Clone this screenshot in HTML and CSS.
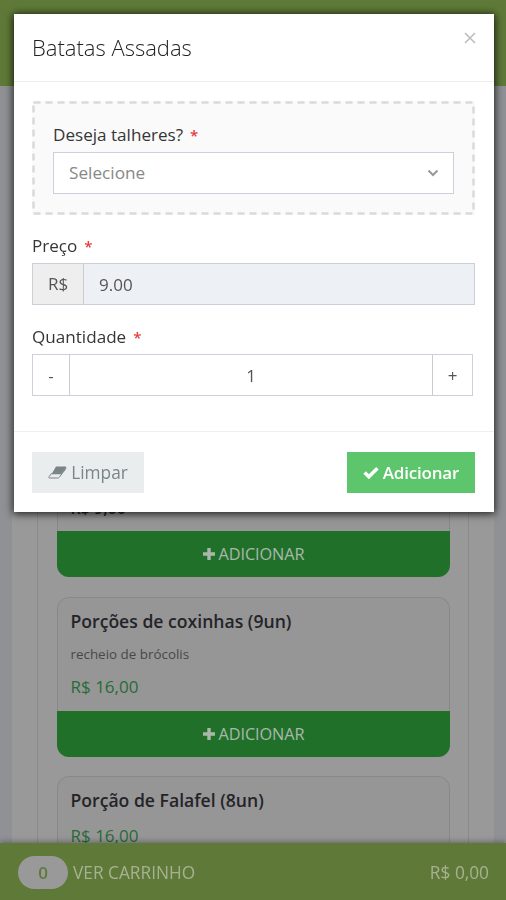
FILE: index.html
```
<!DOCTYPE html>
<html lang="pt-BR">
<head>
<meta charset="utf-8">
<meta name="viewport" content="width=device-width, initial-scale=1">
<title>Batatas Assadas</title>
<link rel="stylesheet" href="styles.css">
</head>
<body>
<svg class="sprite" aria-hidden="true">
  <symbol id="plus" viewBox="0 0 12 12"><path d="M4.3 0h3.4v4.3H12v3.4H7.700V12H4.300V7.700H0V4.300h4.300z"/></symbol>
</svg>
<div class="page">
  <header class="topbar"></header>
  <main class="content">
    <section class="panel">
      <article class="card">
        <div class="card-body"><p class="price price-old">R$ 9,00</p></div>
        <button class="add"><svg class="plus"><use href="#plus"/></svg><span>ADICIONAR</span></button>
      </article>
      <article class="card">
        <div class="card-body">
          <h2 class="name">Porções de coxinhas (9un)</h2>
          <p class="desc">recheio de brócolis</p>
          <p class="price">R$ 16,00</p>
        </div>
        <button class="add"><svg class="plus"><use href="#plus"/></svg><span>ADICIONAR</span></button>
      </article>
      <article class="card">
        <div class="card-body">
          <h2 class="name">Porção de Falafel (8un)</h2>
          <p class="price">R$ 16,00</p>
        </div>
      </article>
    </section>
  </main>
</div>
<footer class="cart">
  <span class="count">0</span>
  <span class="cart-label">VER CARRINHO</span>
  <span class="total">R$ 0,00</span>
</footer>
<div class="modal" role="dialog">
  <div class="modal-header">
    <h1 class="title">Batatas Assadas</h1>
    <svg class="close" viewBox="0 0 12 12"><path d="M1 1l10 10M11 1L1 11"/></svg>
  </div>
  <div class="modal-body">
    <div class="option">
      <svg class="dashes" width="443" height="114"><rect x="1.500" y="1.500" width="440" height="111"/></svg>
      <label class="label"><span>Deseja talheres?</span><span class="req">*</span></label>
      <div class="select"><span class="select-text">Selecione</span><svg class="chevron" viewBox="0 0 12 8"><path d="M1.500 1.500L6 6l4.500-4.500"/></svg></div>
    </div>
    <label class="label label-price"><span>Preço</span><span class="req">*</span></label>
    <div class="price-group"><span class="currency">R$</span><span class="amount">9.00</span></div>
    <label class="label label-qty"><span>Quantidade</span><span class="req">*</span></label>
    <div class="stepper"><button class="minus">-</button><span class="qty">1</span><button class="more">+</button></div>
  </div>
  <div class="modal-footer">
    <button class="btn clear"><svg class="eraser" viewBox="0 0 19 13"><path class="solid" d="M8 .5H17.500q1.300 0 .6 1.500L13.200 8.300H3.500z"/><path class="line" d="M3.500 7.500L1.100 10.600q-.8 1.400.7 1.400h8q1 0 1.600-.8L18 2.500M3.500 7.500h10"/></svg><span>Limpar</span></button>
    <button class="btn submit"><svg class="check" viewBox="0 0 15 12"><path d="M1.500 6l4 4L13.500 2"/></svg><span>Adicionar</span></button>
  </div>
</div>
</body>
</html>
```
FILE: styles.css
```
* { box-sizing: border-box; margin: 0; padding: 0; }
body { height: 900px; overflow: hidden; background: #8f9194; font-family: "Open Sans", "Noto Sans", sans-serif; color: #444; }
button { border: 0; font: inherit; color: inherit; white-space: nowrap; }
.sprite { display: none; }
.page { height: 900px; overflow: hidden; }
.topbar { height: 86px; background: #5f7a38; }
.content { margin: 0 12px; background: #999; }
.panel { display: flex; flex-direction: column; gap: 20px; margin: 0 25px; padding: 331px 18px 0 19px; border: solid #8b8b8b; border-width: 0 1px; height: 814px; }
.card { display: flex; flex-direction: column; flex: none; height: 160px; border-radius: 12px; overflow: hidden; background: #969696; }
.card-body { height: 114px; padding: 11px 13px 0 12.5px; border: 1px solid #888; border-bottom: 0; border-radius: 12px 12px 0 0; }
.card + .card { margin-top: -.5px; }
.add { display: flex; align-items: center; justify-content: center; gap: 4px; height: 46px; background: #21702a; color: #a9b8aa; font-size: 16.3px; letter-spacing: -.1px; }
.plus { width: 12px; height: 12px; fill: #a9b8aa; }
.name { font-size: 17.6px; line-height: 24px; font-weight: 600; color: #242428; white-space: nowrap; }
.desc { margin-top: 11px; font-size: 13.4px; line-height: 20px; color: #484848; }
.price { margin-top: 11px; font-size: 17px; line-height: 24px; color: #286b38; }
.name + .price { margin-top: 12px; }
.price-old { margin-top: 67px; font-size: 16px; font-weight: 600; color: #222; }
.cart { position: fixed; left: 0; right: 0; bottom: 0; height: 57px; display: flex; align-items: center; padding: 1px 17px 0 18px; background: #5f7a38; color: #a7b192; font-size: 17.3px; box-shadow: 0 -1px 6px rgba(0,0,0,.35); }
.count { width: 50px; height: 33px; border-radius: 17px; background: #999; color: #5f7a38; font-size: 17px; font-weight: 600; line-height: 34px; text-align: center; }
.cart-label { margin-left: 5px; }
.total { margin-left: auto; }
.modal { position: fixed; left: 14px; top: 14px; width: 480px; height: 498px; background: #fff; box-shadow: 0 1px 8px 1px rgba(0,0,0,.8); }
.modal-header { display: flex; justify-content: space-between; height: 68px; padding: 18px 18px 0; border-bottom: 1px solid #eee; }
.title { font-size: 22px; line-height: 31px; font-weight: 300; color: #222; }
.close { width: 12px; height: 12px; fill: none; stroke: #bbb; stroke-width: 1.5; }
.modal-body { height: 350px; padding: 19px 19px 0 18px; border-bottom: 1px solid #eee; }
.option { position: relative; height: 114px; padding: 22px 21px 0; background: #fafafa; }
.dashes { position: absolute; left: 0; top: 0; fill: none; stroke: #dadada; stroke-width: 2.5; stroke-dasharray: 7 5; }
.label { display: flex; gap: 7px; height: 24px; font-size: 17.1px; line-height: 24px; color: #363636; }
.req { color: #e73a3a; font-size: 15px; font-weight: 600; }
.select { display: flex; align-items: center; justify-content: space-between; height: 42px; margin-top: 5px; padding: 0 14px 0 15px; border: 1px solid #cdcfdd; background: #fff; font-size: 17.2px; color: #888; }
.select-text { position: relative; top: -1px; }
.chevron { width: 12px; height: 8px; fill: none; stroke: #999; stroke-width: 2; }
.label-price { margin-top: 19px; }
.price-group { display: flex; height: 42px; margin-top: 5px; border: 1px solid #ccced8; background: #edf1f5; font-size: 17px; line-height: 42px; color: #555; }
.currency { width: 51px; border-right: 1px solid #ccc; background: #eee; text-align: center; line-height: 40px; }
.amount { padding-left: 15px; }
.label-qty { margin-top: 20px; }
.stepper { display: flex; width: 441px; height: 42px; margin-top: 5px; border: 1px solid #cdcfda; line-height: 41px; color: #555; font-size: 17px; }
.stepper button { background: #fff; flex: none; line-height: 39px; }
.minus { width: 37px; border-right: 1px solid #ccc; }
.more { width: 40px; border-left: 1px solid #ccc; }
.qty { flex: 1; text-align: center; }
.modal-footer { display: flex; justify-content: space-between; padding: 20px 19px 0 18px; }
.btn { display: flex; align-items: center; justify-content: center; height: 41px; gap: 4px; font-size: 17.3px; padding-bottom: 1px; }
.clear { width: 112px; background: #e9eded; color: #7b8587; }
.submit { width: 128px; background: #5dc66c; color: #fff; font-weight: 600; font-size: 17px; letter-spacing: -.2px; }
.eraser { width: 19px; height: 13px; }
.solid { fill: #7b8587; }
.line { fill: none; stroke: #7b8587; stroke-width: 1; }
.check { width: 16px; height: 13px; fill: none; stroke: #fff; stroke-width: 3.3; }
```
